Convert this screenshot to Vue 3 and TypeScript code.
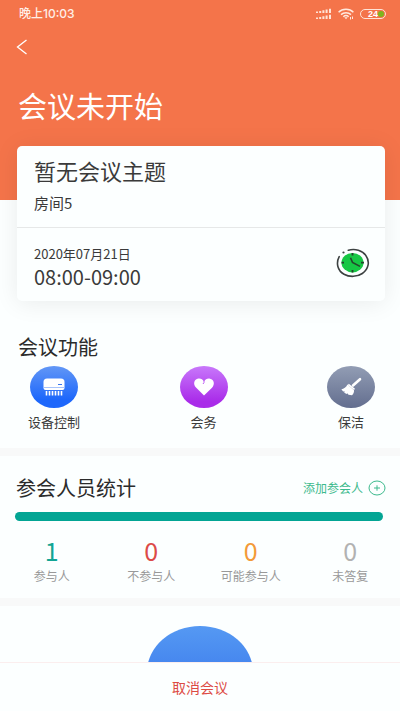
<script setup lang="ts">
interface Stat {
  value: number
  label: string
  tone: string
}

const stats: Stat[] = [
  { value: 1, label: '参与人', tone: 'teal' },
  { value: 0, label: '不参与人', tone: 'red' },
  { value: 0, label: '可能参与人', tone: 'orange' },
  { value: 0, label: '未答复', tone: 'grey' },
]
</script>

<template>
  <div class="page">
    <main class="content">
      <header class="hero">
        <div class="status">
          <span class="time">晚上10:03</span>
          <span class="indicators">
            <svg width="16" height="12" viewBox="0 0 16 12" fill="#ffe3d6" aria-hidden="true">
              <path d="M0 3.500h2V5H0zM3.200 3h2v2h-2zM6.400 2.300h2V5h-2zM9.600 1.500h2V5h-2zM13 .7h2V5h-2z" />
              <path d="M0 9.500h2V11H0zM3.200 9h2v2h-2zM6.400 8.300h2V11h-2zM9.600 7.500h2V11h-2zM13 6.700h2V11h-2z" />
            </svg>
            <svg width="16" height="12" viewBox="0 0 16 12" fill="none" stroke="#ffe9de" stroke-width="1.500" aria-hidden="true">
              <path d="M.6 4.200C4.500.4 11.500.4 15.400 4.200M3 6.600c2.700-2.600 7.300-2.600 10 0M5.300 8.700c1.500-1.400 3.900-1.400 5.400 0" />
              <path d="M6.300 9.300h3.400L8 11.300z" fill="#ffe9de" stroke="none" />
              <path d="M12.500 9v2.500M14.500 8.500V11" stroke-width="1" />
            </svg>
            <span class="battery">24<i class="charge"></i></span>
          </span>
        </div>
        <button class="back" type="button" aria-label="返回">
          <svg width="12" height="16" viewBox="0 0 12 16" fill="none" stroke="#fff" stroke-width="1.300">
            <path d="M10.500 1 1.500 8l9 7" />
          </svg>
        </button>
        <h1>会议未开始</h1>
      </header>

      <section class="card">
        <div class="topic">
          <h2>暂无会议主题</h2>
          <p>房间5</p>
        </div>
        <div class="schedule">
          <div>
            <p class="date">2020年07月21日</p>
            <p class="hours">08:00-09:00</p>
          </div>
          <svg class="clock" width="34" height="30" viewBox="0 0 34 30" fill="none" aria-hidden="true">
            <path d="M3.200 8.700C-.2 15 1.500 22.500 8 26.200c5.500 3.100 13.200 2.800 18.300-.7 6.300-4.300 7.800-12 3.700-17.800C26.500 2.500 19 .300 12.300 2.300" stroke="#3d4242" stroke-width="1.600" stroke-linecap="round" />
            <circle cx="7.500" cy="4.500" r="1.100" fill="#3d4242" />
            <ellipse cx="16.500" cy="14.700" rx="11" ry="9.700" fill="#16c744" />
            <path d="M16.500 5v2.500M16.500 22v2.500M5.500 14.700H8M25 14.700h3" stroke="#24452c" stroke-width="1.800" />
            <path d="M14.500 9.700l2 4.700 7.500 4" stroke="#24452c" stroke-width="1.600" />
          </svg>
        </div>
      </section>

      <section class="functions">
        <h3>会议功能</h3>
        <div class="function-list">
          <button type="button" class="function">
            <span class="bubble blue">
              <svg width="48" height="42" viewBox="0 0 48 42" aria-hidden="true">
                <path d="M17 12.500h14q3.500 0 3.500 3.500v6q0 2-2 2h-17q-2 0-2-2v-6q0-3.500 3.500-3.500z" fill="#fff" />
                <path d="M14 21.500h20" stroke="#a9c4fb" stroke-width="1" />
                <path d="M28 18.500h4" stroke="#3a77ef" stroke-width="1" />
                <path d="M16.500 25v4.500M19.500 25v4.500M22.500 25v4.500M25.500 25v4.500M28.500 25v4.500M31.500 25v4.500" stroke="#fff" stroke-width="1.600" />
              </svg>
            </span>
            <span>设备控制</span>
          </button>
          <button type="button" class="function">
            <span class="bubble purple">
              <svg width="48" height="42" viewBox="0 0 48 42" aria-hidden="true">
                <path d="M24 29.500 16 21.500c-3.200-3.300-2-8.300 2.300-9 2.400-.4 4.400.8 5.700 2.800 1.300-2 3.600-3.200 6-2.600 4.200.9 5.100 5.700 2 9z" fill="#fff" />
                <path d="M24 14v2.500l-1 1.500" fill="none" stroke="#bd5cf2" stroke-width="1" />
              </svg>
            </span>
            <span>会务</span>
          </button>
          <button type="button" class="function">
            <span class="bubble slate">
              <svg width="48" height="42" viewBox="0 0 48 42" aria-hidden="true">
                <path d="M33 13.200l-7 6.300" stroke="#fff" stroke-width="2.600" stroke-linecap="round" />
                <path d="M21.800 17.800l6.200 5-1 1.200-6.200-5z" fill="#fff" />
                <path d="M20.500 18.600l6.500 5.700c.2 2-.6 3.700-2 5l-3.500-.6-1.200-1.400-.6.700-2.400-1.300.3-1.500-1.500.2-1.700-2.200c2.500-.3 4.600-1.700 6.100-4.600z" fill="#fff" />
              </svg>
            </span>
            <span>保洁</span>
          </button>
        </div>
      </section>

      <section class="people">
        <div class="people-head">
          <h3>参会人员统计</h3>
          <button type="button" class="add">
            <span>添加参会人</span>
            <svg width="18" height="16" viewBox="0 0 18 16" fill="none" stroke="#3cba8d" aria-hidden="true">
              <ellipse cx="9" cy="8" rx="8" ry="7" stroke-width="1" />
              <path d="M6 8h6M9 5.300v5.400" stroke-width="1" />
            </svg>
          </button>
        </div>
        <div class="bar"></div>
        <ul class="stats">
          <li v-for="stat in stats" :key="stat.label">
            <strong :class="stat.tone">{{ stat.value }}</strong>
            <span>{{ stat.label }}</span>
          </li>
        </ul>
      </section>

      <section class="check">
        <div class="disc"></div>
      </section>
    </main>

    <footer class="footer">
      <button type="button">取消会议</button>
    </footer>
  </div>
</template>

<style>
body {
  margin: 0;
}
</style>

<style scoped>
.page {
  display: flex;
  flex-direction: column;
  height: 100vh;
  background: #fcffff;
  color: #3a3a3a;
  font-family: "Noto Sans CJK SC", sans-serif;
}

h1, h2, h3, p, ul {
  margin: 0;
  padding: 0;
  font-weight: 400;
}

button {
  padding: 0;
  border: 0;
  background: none;
  color: inherit;
  font: inherit;
  cursor: pointer;
}

svg {
  display: block;
}

.content {
  flex: 1;
  min-height: 0;
  overflow-y: auto;
  scrollbar-width: none;
}

.hero {
  box-sizing: border-box;
  height: 200px;
  padding: 6px 14px 0 19px;
  background: #f4744a;
  color: #fff;
}

.status {
  display: flex;
  align-items: center;
  justify-content: space-between;
  height: 16px;
}

.time {
  color: #ffeee6;
  font: 500 12px/16px Inter, "Noto Sans CJK SC", sans-serif;
}

.indicators {
  display: flex;
  align-items: center;
  gap: 6px;
}

.battery {
  display: flex;
  align-items: center;
  justify-content: flex-end;
  box-sizing: border-box;
  width: 26px;
  height: 10px;
  padding-right: 1px;
  border: 1px solid #ffe3d6;
  border-radius: 5px;
  color: #fff;
  font: 700 9px/8px "Liberation Sans", sans-serif;
}

.charge {
  width: 6px;
  height: 6px;
  border-radius: 3px;
  background: #7fb51e;
}

.back {
  display: block;
  margin-top: 17px;
  margin-left: -3px;
}

h1 {
  margin-top: 30px;
  margin-left: -1px;
  font-size: 29px;
  line-height: 40px;
}

.card {
  position: relative;
  margin: -54px 15px 0 17px;
  border-radius: 5px;
  background: #fcffff;
  box-shadow: 0 2px 24px rgba(0, 0, 0, 0.08);
}

.topic {
  padding: 8px 17px 13px;
  border-bottom: 1px solid #e6e8e8;
}

h2 {
  font-size: 22px;
  line-height: 32px;
}

.topic p {
  margin-top: 6px;
  font-size: 15px;
  line-height: 22px;
}

.schedule {
  display: flex;
  align-items: flex-start;
  justify-content: space-between;
  padding: 17px 15px 11px 17px;
}

.date {
  font-size: 13px;
  line-height: 18px;
}

.hours {
  font-size: 20px;
  line-height: 27px;
}

.clock {
  margin-top: 3px;
}

h3 {
  color: #2b2b2b;
  font-size: 20px;
  line-height: 28px;
}

.functions {
  padding: 32px 25px 16px 28px;
  border-bottom: 8px solid #f8f9f9;
}

.functions h3 {
  margin-left: -10px;
}

.function-list {
  display: flex;
  justify-content: space-between;
  margin-top: 5px;
}

.function {
  display: flex;
  flex-direction: column;
  align-items: center;
  gap: 4px;
  font-size: 13px;
  line-height: 20px;
}

.bubble {
  width: 48px;
  height: 42px;
  border-radius: 50%;
}

.blue {
  background: linear-gradient(#6297f6, #1d67fb 80%);
}

.purple {
  background: linear-gradient(#c878fb, #a92be9 85%);
}

.slate {
  background: linear-gradient(#929db4, #636e8f);
}

.people {
  padding: 18px 0 13px;
  border-bottom: 8px solid #f8f9f9;
}

.people-head {
  display: flex;
  align-items: center;
  justify-content: space-between;
  padding: 0 14px 0 16px;
}

.add {
  display: flex;
  align-items: center;
  gap: 5px;
  color: #3cba8d;
  font-size: 12px;
  line-height: 18px;
}

.bar {
  height: 9px;
  margin: 10px 17px 0 15px;
  border-radius: 5px;
  background: #03a594;
}

.stats {
  display: grid;
  grid-template-columns: repeat(4, 1fr);
  margin-top: 13px;
  padding-left: 2px;
  list-style: none;
}

.stats li {
  display: flex;
  flex-direction: column;
  align-items: center;
  color: #999;
  font-size: 12px;
  line-height: 18px;
}

.stats strong {
  font-size: 25px;
  font-weight: 400;
  line-height: 33px;
}

.stats .teal {
  color: #12a594;
}

.stats .red {
  color: #dc4b48;
}

.stats .orange {
  color: #f39a38;
}

.stats .grey {
  color: #b2b2b2;
}

.check {
  box-sizing: border-box;
  height: 56px;
  padding-top: 20px;
  overflow: hidden;
}

.disc {
  width: 106px;
  height: 92px;
  margin: 0 auto;
  border-radius: 50%;
  background: linear-gradient(#5599f3, #4383ee 50%);
}

.footer {
  border-top: 1px solid #fbeeee;
}

.footer button {
  display: block;
  width: 100%;
  height: 48px;
  color: #dc4b44;
  font-size: 14px;
}
</style>
